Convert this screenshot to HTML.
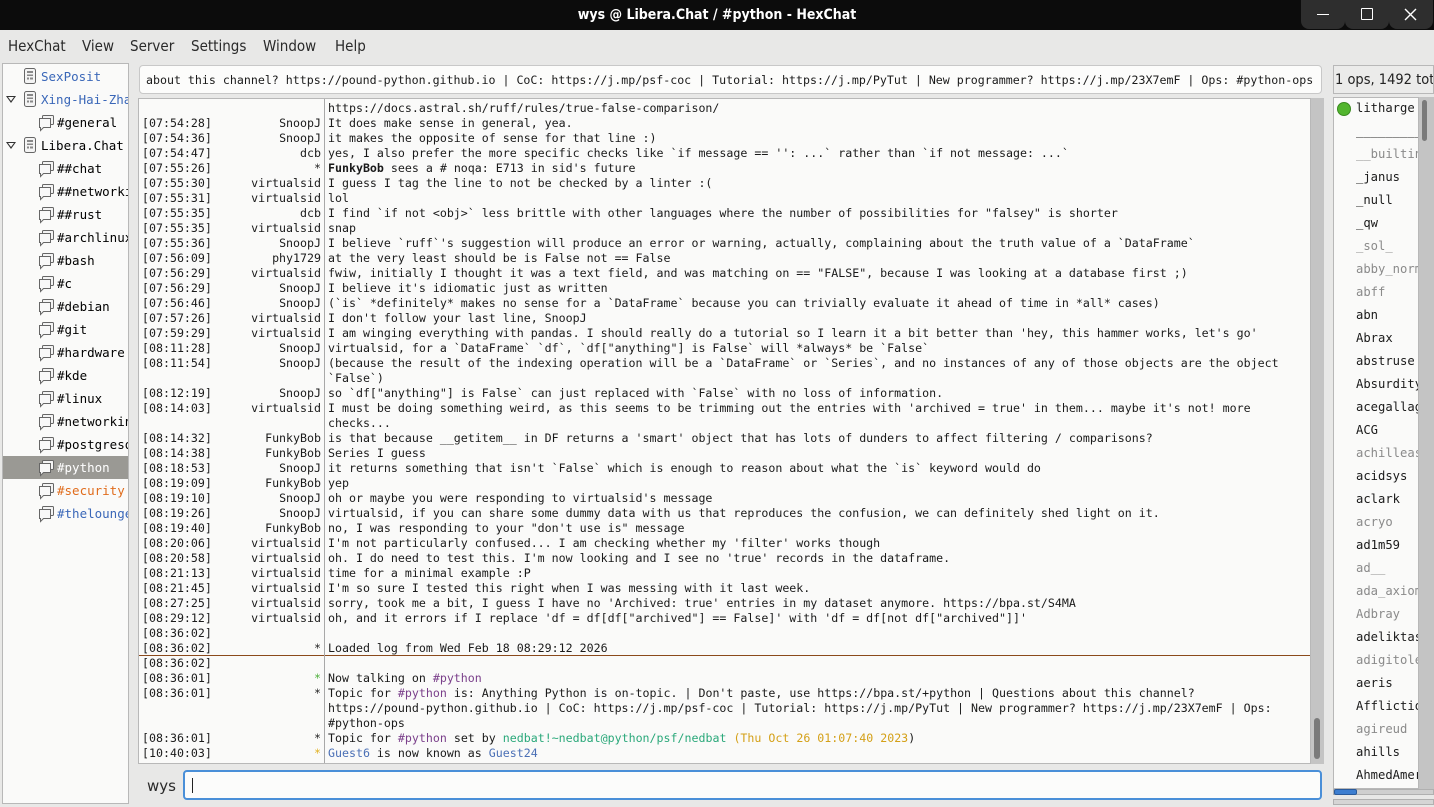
<!DOCTYPE html>
<html><head><meta charset="utf-8"><style>
*{margin:0;padding:0;box-sizing:border-box}
body{width:1434px;height:807px;overflow:hidden;background:#e8e8e7;font-family:"DejaVu Sans","Liberation Sans",sans-serif;position:relative}
.abs{position:absolute}
#title{left:0;top:0;width:1434px;height:30px;background:#0c0c0c;color:#fff;font-weight:bold;font-size:14px;text-align:center;line-height:30px;font-family:"DejaVu Sans Condensed","DejaVu Sans",sans-serif}
.wb{top:0;width:44px;height:29px;background:#2e2e2e;border-radius:0 0 8px 8px}
#menu{left:0;top:30px;width:1434px;height:32px;font-size:15px;color:#2a2a2a;font-family:"DejaVu Sans Condensed","DejaVu Sans",sans-serif}
#menu span{position:absolute;top:7px}
.mono{font-family:"DejaVu Sans Mono","Liberation Mono",monospace;font-size:11.62px}
#left{left:2px;top:63px;width:127px;height:741px;background:#fafaf9;border:1px solid #b8b8b8;overflow:hidden}
.tr{position:absolute;left:0;height:23px;width:125px;white-space:nowrap;line-height:23px;font-size:13px}
.tr .t{position:absolute}
#topic{left:139px;top:65px;width:1183px;height:29px;background:#fcfcfb;border:1px solid #c8c8c8;border-radius:4px;line-height:28px;padding-left:6px;white-space:nowrap;overflow:hidden;color:#1a1a1a}
#chat{left:138px;top:98px;width:1173px;height:666px;background:#fafaf9;border:1px solid #b8b8b8;overflow:hidden;color:#1a1a1a}
#sb{left:1311px;top:98px;width:13px;height:666px;background:#c4c4c4}
.row{position:absolute;left:0;width:1170px;line-height:15px;white-space:pre;margin-top:1px}
.ts{position:absolute;left:3px}
.nk{position:absolute;right:988px;text-align:right}
.ms{position:absolute;left:189px}
#sep{left:324px;top:99px;width:1px;height:664px;background:#a8a8a8}
#input{left:183px;top:770px;width:1139px;height:30px;border:2px solid #4a8fd8;border-radius:4px;background:#fcfcfb}
#right{left:1333px;top:97px;width:86px;height:692px;background:#fafaf9;border:1px solid #b8b8b8;overflow:hidden}
.u{position:absolute;left:22px;line-height:23px;white-space:nowrap;color:#1a1a1a;margin-top:-1px}
.g{color:#8a8a8a}
.tri{position:absolute;left:3px;top:8px;width:0;height:0;border-left:5px solid transparent;border-right:5px solid transparent;border-top:7px solid #333}
.tri:after{content:"";position:absolute;left:-3px;top:-6px;border-left:3px solid transparent;border-right:3px solid transparent;border-top:4px solid #fafaf9}
</style></head><body>
<div id="title" class="abs">wys @ Libera.Chat / #python - HexChat</div>
<div class="abs wb" style="left:1301px"></div><div class="abs wb" style="left:1345px"></div><div class="abs wb" style="left:1389px"></div>
<div class="abs" style="left:1317px;top:14px;width:12px;height:1px;background:#fff"></div>
<div class="abs" style="left:1361px;top:8px;width:12px;height:12px;border:1.5px solid #fff;border-radius:1px"></div>
<svg class="abs" style="left:1404px;top:8px" width="13" height="13"><path d="M1 1L12 12M12 1L1 12" stroke="#fff" stroke-width="1.4"/></svg>
<div id="menu" class="abs"><span style="left:8px">HexChat</span><span style="left:82px">View</span><span style="left:130px">Server</span><span style="left:191px">Settings</span><span style="left:263px">Window</span><span style="left:335px">Help</span></div>

<div id="left" class="abs">
<svg width="0" height="0" style="position:absolute"><defs>
<g id="srv"><rect x="1.5" y="0.5" width="11" height="15" rx="2" fill="#f4f4f4" stroke="#666"/><rect x="4" y="3" width="6" height="2" fill="#888"/><rect x="4" y="6.5" width="6" height="1.5" fill="#888"/><rect x="4" y="9.5" width="2" height="2" fill="#888"/><rect x="7" y="9.5" width="3" height="2" fill="#888"/></g>
<g id="bub"><rect x="4.5" y="0.5" width="11" height="9" rx="1" fill="#f4f4f4" stroke="#666"/><path d="M1.5 3.5h11v9h-7l-3 3v-3h-1z" fill="#f8f8f8" stroke="#666"/></g>
</defs></svg>
<div class="tr" style="top:1px"><svg class="t" style="left:20px;top:3px" width="15" height="17"><use href="#srv"/></svg><span class="t mono" style="left:38px;font-size:12.5px;color:#3a67b8">SexPosit</span></div>
<div class="tr" style="top:24px"><span class="tri"></span><svg class="t" style="left:20px;top:3px" width="15" height="17"><use href="#srv"/></svg><span class="t mono" style="left:38px;font-size:12.5px;color:#3a67b8">Xing-Hai-Zhang</span></div>
<div class="tr" style="top:47px"><svg class="t" style="left:35px;top:4px" width="17" height="17"><use href="#bub"/></svg><span class="t mono" style="left:54px;font-size:12.5px">#general</span></div>
<div class="tr" style="top:70px"><span class="tri"></span><svg class="t" style="left:20px;top:3px" width="15" height="17"><use href="#srv"/></svg><span class="t mono" style="left:38px;font-size:12.5px">Libera.Chat</span></div>
<div class="tr" style="top:93px"><svg class="t" style="left:35px;top:4px" width="17" height="17"><use href="#bub"/></svg><span class="t mono" style="left:54px;font-size:12.5px">##chat</span></div>
<div class="tr" style="top:116px"><svg class="t" style="left:35px;top:4px" width="17" height="17"><use href="#bub"/></svg><span class="t mono" style="left:54px;font-size:12.5px">##networking</span></div>
<div class="tr" style="top:139px"><svg class="t" style="left:35px;top:4px" width="17" height="17"><use href="#bub"/></svg><span class="t mono" style="left:54px;font-size:12.5px">##rust</span></div>
<div class="tr" style="top:162px"><svg class="t" style="left:35px;top:4px" width="17" height="17"><use href="#bub"/></svg><span class="t mono" style="left:54px;font-size:12.5px">#archlinux</span></div>
<div class="tr" style="top:185px"><svg class="t" style="left:35px;top:4px" width="17" height="17"><use href="#bub"/></svg><span class="t mono" style="left:54px;font-size:12.5px">#bash</span></div>
<div class="tr" style="top:208px"><svg class="t" style="left:35px;top:4px" width="17" height="17"><use href="#bub"/></svg><span class="t mono" style="left:54px;font-size:12.5px">#c</span></div>
<div class="tr" style="top:231px"><svg class="t" style="left:35px;top:4px" width="17" height="17"><use href="#bub"/></svg><span class="t mono" style="left:54px;font-size:12.5px">#debian</span></div>
<div class="tr" style="top:254px"><svg class="t" style="left:35px;top:4px" width="17" height="17"><use href="#bub"/></svg><span class="t mono" style="left:54px;font-size:12.5px">#git</span></div>
<div class="tr" style="top:277px"><svg class="t" style="left:35px;top:4px" width="17" height="17"><use href="#bub"/></svg><span class="t mono" style="left:54px;font-size:12.5px">#hardware</span></div>
<div class="tr" style="top:300px"><svg class="t" style="left:35px;top:4px" width="17" height="17"><use href="#bub"/></svg><span class="t mono" style="left:54px;font-size:12.5px">#kde</span></div>
<div class="tr" style="top:323px"><svg class="t" style="left:35px;top:4px" width="17" height="17"><use href="#bub"/></svg><span class="t mono" style="left:54px;font-size:12.5px">#linux</span></div>
<div class="tr" style="top:346px"><svg class="t" style="left:35px;top:4px" width="17" height="17"><use href="#bub"/></svg><span class="t mono" style="left:54px;font-size:12.5px">#networking</span></div>
<div class="tr" style="top:369px"><svg class="t" style="left:35px;top:4px" width="17" height="17"><use href="#bub"/></svg><span class="t mono" style="left:54px;font-size:12.5px">#postgresql</span></div>
<div class="tr" style="top:392px;background:#9a9994"><svg class="t" style="left:35px;top:4px" width="17" height="17"><use href="#bub"/></svg><span class="t mono" style="left:54px;font-size:12.5px;color:#fff">#python</span></div>
<div class="tr" style="top:415px"><svg class="t" style="left:35px;top:4px" width="17" height="17"><use href="#bub"/></svg><span class="t mono" style="left:54px;font-size:12.5px;color:#e06c1c">#security</span></div>
<div class="tr" style="top:438px"><svg class="t" style="left:35px;top:4px" width="17" height="17"><use href="#bub"/></svg><span class="t mono" style="left:54px;font-size:12.5px;color:#3a67b8">#thelounge</span></div>
</div>

<div id="topic" class="abs mono">about this channel? https://pound-python.github.io | CoC: https://j.mp/psf-coc | Tutorial: https://j.mp/PyTut | New programmer? https://j.mp/23X7emF | Ops: #python-ops</div>

<div id="chat" class="abs mono">
<div class="row" style="top:1px"><span class="ms">https://docs.astral.sh/ruff/rules/true-false-comparison/</span></div>
<div class="row" style="top:16px"><span class="ts">[07:54:28]</span><span class="nk">SnoopJ</span><span class="ms">It does make sense in general, yea.</span></div>
<div class="row" style="top:31px"><span class="ts">[07:54:36]</span><span class="nk">SnoopJ</span><span class="ms">it makes the opposite of sense for that line :)</span></div>
<div class="row" style="top:46px"><span class="ts">[07:54:47]</span><span class="nk">dcb</span><span class="ms">yes, I also prefer the more specific checks like `if message == '': ...` rather than `if not message: ...`</span></div>
<div class="row" style="top:61px"><span class="ts">[07:55:26]</span><span class="nk">*</span><span class="ms"><b>FunkyBob</b> sees a # noqa: E713 in sid's future</span></div>
<div class="row" style="top:76px"><span class="ts">[07:55:30]</span><span class="nk">virtualsid</span><span class="ms">I guess I tag the line to not be checked by a linter :(</span></div>
<div class="row" style="top:91px"><span class="ts">[07:55:31]</span><span class="nk">virtualsid</span><span class="ms">lol</span></div>
<div class="row" style="top:106px"><span class="ts">[07:55:35]</span><span class="nk">dcb</span><span class="ms">I find `if not &lt;obj&gt;` less brittle with other languages where the number of possibilities for "falsey" is shorter</span></div>
<div class="row" style="top:121px"><span class="ts">[07:55:35]</span><span class="nk">virtualsid</span><span class="ms">snap</span></div>
<div class="row" style="top:136px"><span class="ts">[07:55:36]</span><span class="nk">SnoopJ</span><span class="ms">I believe `ruff`'s suggestion will produce an error or warning, actually, complaining about the truth value of a `DataFrame`</span></div>
<div class="row" style="top:151px"><span class="ts">[07:56:09]</span><span class="nk">phy1729</span><span class="ms">at the very least should be is False not == False</span></div>
<div class="row" style="top:166px"><span class="ts">[07:56:29]</span><span class="nk">virtualsid</span><span class="ms">fwiw, initially I thought it was a text field, and was matching on == "FALSE", because I was looking at a database first ;)</span></div>
<div class="row" style="top:181px"><span class="ts">[07:56:29]</span><span class="nk">SnoopJ</span><span class="ms">I believe it's idiomatic just as written</span></div>
<div class="row" style="top:196px"><span class="ts">[07:56:46]</span><span class="nk">SnoopJ</span><span class="ms">(`is` *definitely* makes no sense for a `DataFrame` because you can trivially evaluate it ahead of time in *all* cases)</span></div>
<div class="row" style="top:211px"><span class="ts">[07:57:26]</span><span class="nk">virtualsid</span><span class="ms">I don't follow your last line, SnoopJ</span></div>
<div class="row" style="top:226px"><span class="ts">[07:59:29]</span><span class="nk">virtualsid</span><span class="ms">I am winging everything with pandas. I should really do a tutorial so I learn it a bit better than 'hey, this hammer works, let's go'</span></div>
<div class="row" style="top:241px"><span class="ts">[08:11:28]</span><span class="nk">SnoopJ</span><span class="ms">virtualsid, for a `DataFrame` `df`, `df["anything"] is False` will *always* be `False`</span></div>
<div class="row" style="top:256px"><span class="ts">[08:11:54]</span><span class="nk">SnoopJ</span><span class="ms">(because the result of the indexing operation will be a `DataFrame` or `Series`, and no instances of any of those objects are the object
`False`)</span></div>
<div class="row" style="top:286px"><span class="ts">[08:12:19]</span><span class="nk">SnoopJ</span><span class="ms">so `df["anything"] is False` can just replaced with `False` with no loss of information.</span></div>
<div class="row" style="top:301px"><span class="ts">[08:14:03]</span><span class="nk">virtualsid</span><span class="ms">I must be doing something weird, as this seems to be trimming out the entries with 'archived = true' in them... maybe it's not! more
checks...</span></div>
<div class="row" style="top:331px"><span class="ts">[08:14:32]</span><span class="nk">FunkyBob</span><span class="ms">is that because __getitem__ in DF returns a 'smart' object that has lots of dunders to affect filtering / comparisons?</span></div>
<div class="row" style="top:346px"><span class="ts">[08:14:38]</span><span class="nk">FunkyBob</span><span class="ms">Series I guess</span></div>
<div class="row" style="top:361px"><span class="ts">[08:18:53]</span><span class="nk">SnoopJ</span><span class="ms">it returns something that isn't `False` which is enough to reason about what the `is` keyword would do</span></div>
<div class="row" style="top:376px"><span class="ts">[08:19:09]</span><span class="nk">FunkyBob</span><span class="ms">yep</span></div>
<div class="row" style="top:391px"><span class="ts">[08:19:10]</span><span class="nk">SnoopJ</span><span class="ms">oh or maybe you were responding to virtualsid's message</span></div>
<div class="row" style="top:406px"><span class="ts">[08:19:26]</span><span class="nk">SnoopJ</span><span class="ms">virtualsid, if you can share some dummy data with us that reproduces the confusion, we can definitely shed light on it.</span></div>
<div class="row" style="top:421px"><span class="ts">[08:19:40]</span><span class="nk">FunkyBob</span><span class="ms">no, I was responding to your "don't use is" message</span></div>
<div class="row" style="top:436px"><span class="ts">[08:20:06]</span><span class="nk">virtualsid</span><span class="ms">I'm not particularly confused... I am checking whether my 'filter' works though</span></div>
<div class="row" style="top:451px"><span class="ts">[08:20:58]</span><span class="nk">virtualsid</span><span class="ms">oh. I do need to test this. I'm now looking and I see no 'true' records in the dataframe.</span></div>
<div class="row" style="top:466px"><span class="ts">[08:21:13]</span><span class="nk">virtualsid</span><span class="ms">time for a minimal example :P</span></div>
<div class="row" style="top:481px"><span class="ts">[08:21:45]</span><span class="nk">virtualsid</span><span class="ms">I'm so sure I tested this right when I was messing with it last week.</span></div>
<div class="row" style="top:496px"><span class="ts">[08:27:25]</span><span class="nk">virtualsid</span><span class="ms">sorry, took me a bit, I guess I have no 'Archived: true' entries in my dataset anymore. https://bpa.st/S4MA</span></div>
<div class="row" style="top:511px"><span class="ts">[08:29:12]</span><span class="nk">virtualsid</span><span class="ms">oh, and it errors if I replace 'df = df[df["archived"] == False]' with 'df = df[not df["archived"]]'</span></div>
<div class="row" style="top:526px"><span class="ts">[08:36:02]</span></div>
<div class="row" style="top:541px"><span class="ts">[08:36:02]</span><span class="nk">*</span><span class="ms">Loaded log from Wed Feb 18 08:29:12 2026</span></div>
<div class="abs" style="left:0;top:556px;width:1172px;height:1px;background:#8b4a1c"></div>
<div class="row" style="top:556px"><span class="ts">[08:36:02]</span></div>
<div class="row" style="top:571px"><span class="ts">[08:36:01]</span><span class="nk" style="color:#4caf3a">*</span><span class="ms">Now talking on <span style="color:#7a3f8a">#python</span></span></div>
<div class="row" style="top:586px"><span class="ts">[08:36:01]</span><span class="nk">*</span><span class="ms">Topic for <span style="color:#7a3f8a">#python</span> is: Anything Python is on-topic. | Don't paste, use https://bpa.st/+python | Questions about this channel?
https://pound-python.github.io | CoC: https://j.mp/psf-coc | Tutorial: https://j.mp/PyTut | New programmer? https://j.mp/23X7emF | Ops:
#python-ops</span></div>
<div class="row" style="top:631px"><span class="ts">[08:36:01]</span><span class="nk">*</span><span class="ms">Topic for <span style="color:#7a3f8a">#python</span> set by <span style="color:#2aa87a">nedbat!~nedbat@python/psf/nedbat</span> <span style="color:#d4a017">(Thu Oct 26 01:07:40 2023</span>)</span></div>
<div class="row" style="top:646px"><span class="ts">[10:40:03]</span><span class="nk" style="color:#e0b020">*</span><span class="ms"><span style="color:#4a6fb5">Guest6</span> is now known as <span style="color:#4a6fb5">Guest24</span></span></div>
</div>
<div id="sep" class="abs"></div>
<div id="sb" class="abs"></div>
<div class="abs" style="left:1314px;top:718px;width:6px;height:41px;background:#7a7a7a;border-radius:3px"></div>

<div class="abs" style="left:147px;top:777px;font-size:15px;color:#2a2a2a">wys</div>
<div id="input" class="abs"><div style="position:absolute;left:7px;top:6px;width:1px;height:15px;background:#222"></div></div>

<div class="abs" style="left:1333px;top:65px;width:101px;height:29px;border:1px solid #b8b8b8;background:#ebebea;font-size:14.5px;line-height:28px;padding-left:1px;white-space:nowrap;overflow:hidden;color:#222;font-family:'DejaVu Sans Condensed','DejaVu Sans',sans-serif">1 ops, 1492 total</div>
<div id="right" class="abs mono" style="font-size:12.2px">
<div style="position:absolute;left:3px;top:4px;width:14px;height:14px;border-radius:50%;background:#52b52e;border:1px solid #3a8a20"></div>
<div class="u" style="top:0">litharge</div>
<div class="u" style="top:23px">__________</div>
<div class="u g" style="top:46px">__builtin</div>
<div class="u" style="top:69px">_janus</div>
<div class="u" style="top:92px">_null</div>
<div class="u" style="top:115px">_qw</div>
<div class="u g" style="top:138px">_sol_</div>
<div class="u g" style="top:161px">abby_norm</div>
<div class="u g" style="top:184px">abff</div>
<div class="u" style="top:207px">abn</div>
<div class="u" style="top:230px">Abrax</div>
<div class="u" style="top:253px">abstruse</div>
<div class="u" style="top:276px">Absurdity</div>
<div class="u" style="top:299px">acegallag</div>
<div class="u" style="top:322px">ACG</div>
<div class="u g" style="top:345px">achilleas</div>
<div class="u" style="top:368px">acidsys</div>
<div class="u" style="top:391px">aclark</div>
<div class="u g" style="top:414px">acryo</div>
<div class="u" style="top:437px">ad1m59</div>
<div class="u g" style="top:460px">ad__</div>
<div class="u g" style="top:483px">ada_axiom</div>
<div class="u g" style="top:506px">Adbray</div>
<div class="u" style="top:529px">adeliktas</div>
<div class="u g" style="top:552px">adigitole</div>
<div class="u" style="top:575px">aeris</div>
<div class="u" style="top:598px">Afflictio</div>
<div class="u g" style="top:621px">agireud</div>
<div class="u" style="top:644px">ahills</div>
<div class="u" style="top:667px">AhmedAmer</div>
</div>
<div class="abs" style="left:1419px;top:97px;width:15px;height:692px;background:#c4c4c4"></div>
<div class="abs" style="left:1422px;top:100px;width:5px;height:41px;background:#7a7a7a;border-radius:3px"></div>
<div class="abs" style="left:1333px;top:789px;width:101px;height:6px;background:#cfcfcf;border:1px solid #b0b0b0"></div>
<div class="abs" style="left:1334px;top:789px;width:23px;height:6px;background:#3d7ed0;border:1px solid #2a5a9a;border-radius:2px"></div>
<div class="abs" style="left:1333px;top:799px;width:101px;height:6px;background:#d5d5d5;border:1px solid #b0b0b0"></div>
</body></html>
